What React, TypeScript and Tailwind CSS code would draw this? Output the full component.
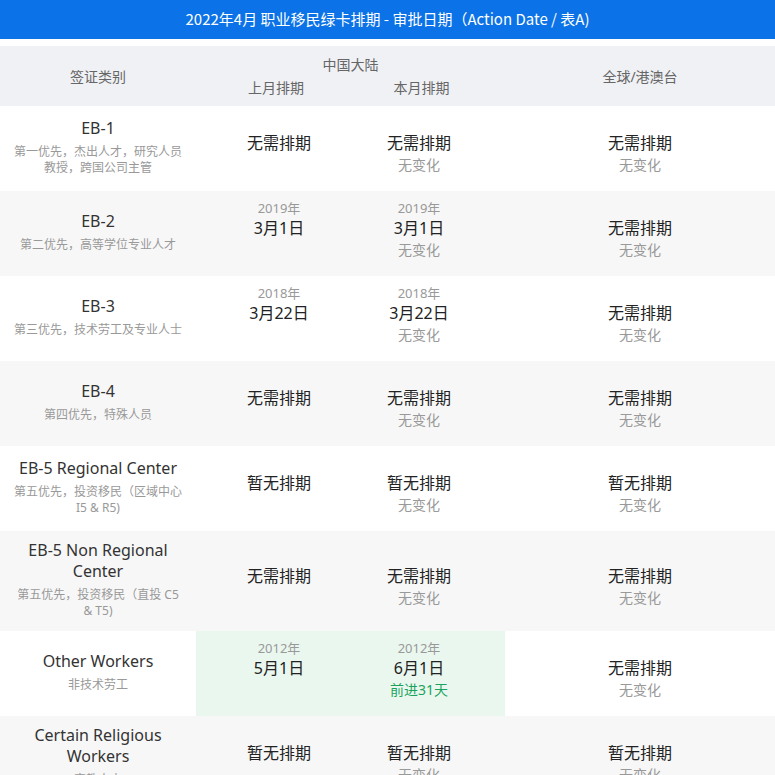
type Val = { year?: string; value: string; change?: string; green?: boolean }

type Row = {
  title: string[]
  sub: string[]
  prev: Val
  cur: Val
  world: Val
  h: string
  hl?: boolean
}

const rows: Row[] = [
  {
    title: ["EB-1"],
    sub: ["第一优先，杰出人才，研究人员", "教授，跨国公司主管"],
    prev: { value: "无需排期" },
    cur: { value: "无需排期", change: "无变化" },
    world: { value: "无需排期", change: "无变化" },
    h: "h-[85px]",
  },
  {
    title: ["EB-2"],
    sub: ["第二优先，高等学位专业人才"],
    prev: { year: "2019年", value: "3月1日" },
    cur: { year: "2019年", value: "3月1日", change: "无变化" },
    world: { value: "无需排期", change: "无变化" },
    h: "h-[85px]",
  },
  {
    title: ["EB-3"],
    sub: ["第三优先，技术劳工及专业人士"],
    prev: { year: "2018年", value: "3月22日" },
    cur: { year: "2018年", value: "3月22日", change: "无变化" },
    world: { value: "无需排期", change: "无变化" },
    h: "h-[85px]",
  },
  {
    title: ["EB-4"],
    sub: ["第四优先，特殊人员"],
    prev: { value: "无需排期" },
    cur: { value: "无需排期", change: "无变化" },
    world: { value: "无需排期", change: "无变化" },
    h: "h-[85px]",
  },
  {
    title: ["EB-5 Regional Center"],
    sub: ["第五优先，投资移民（区域中心", "I5 & R5)"],
    prev: { value: "暂无排期" },
    cur: { value: "暂无排期", change: "无变化" },
    world: { value: "暂无排期", change: "无变化" },
    h: "h-[85px]",
  },
  {
    title: ["EB-5 Non Regional", "Center"],
    sub: ["第五优先，投资移民（直投 C5", "& T5)"],
    prev: { value: "无需排期" },
    cur: { value: "无需排期", change: "无变化" },
    world: { value: "无需排期", change: "无变化" },
    h: "h-[100px]",
  },
  {
    title: ["Other Workers"],
    sub: ["非技术劳工"],
    prev: { year: "2012年", value: "5月1日" },
    cur: { year: "2012年", value: "6月1日", change: "前进31天", green: true },
    world: { value: "无需排期", change: "无变化" },
    h: "h-[85px]",
    hl: true,
  },
  {
    title: ["Certain Religious", "Workers"],
    sub: ["宗教人士"],
    prev: { value: "暂无排期" },
    cur: { value: "暂无排期", change: "无变化" },
    world: { value: "暂无排期", change: "无变化" },
    h: "h-[85px]",
  },
]

function Value({ v }: { v: Val }) {
  return (
    <>
      {v.year && <div className="text-[13px] leading-[17px] -mt-[17px] text-[#999]">{v.year}</div>}
      <div className="text-[16px] leading-[22px] text-[#222]">{v.value}</div>
      <div className={`text-[14px] leading-[21px] ${v.green ? "text-[#1ba35d]" : "text-[#999]"}`}>
        {v.change ?? "\u00a0"}
      </div>
    </>
  )
}

export default function App() {
  return (
    <div className="w-[775px] bg-white" style={{ fontFamily: '"Noto Sans", "Noto Sans CJK SC", sans-serif' }}>
      <div
        className="h-[39px] bg-[#0b72e7] flex items-center justify-center text-white text-[15px]"
        style={{ fontFamily: '"Noto Sans CJK SC", sans-serif' }}
      >
        2022年4月 职业移民绿卡排期 - 审批日期（Action Date / 表A)
      </div>

      <div className="mt-[7px] h-[60px] bg-[#f0f1f5] grid grid-cols-[196px_154px_155px_1fr] text-[14px] text-[#666]">
        <div className="flex items-center justify-center">签证类别</div>
        <div className="col-span-2 flex flex-col items-center justify-center">
          <div className="leading-[20px]">中国大陆</div>
          <div className="mt-[3px] w-full grid grid-cols-[154px_155px] leading-[20px]">
            <div className="text-center pl-[6px]">上月排期</div>
            <div className="text-center pr-[12px]">本月排期</div>
          </div>
        </div>
        <div className="flex items-center justify-center">全球/港澳台</div>
      </div>

      {rows.map((r, i) => (
        <div
          key={r.title.join(" ")}
          className={`grid grid-cols-[196px_154px_155px_1fr] ${r.h} ${i % 2 === 1 ? "bg-[#f7f7f7]" : "bg-white"}`}
        >
          <div className="flex flex-col items-center justify-center px-[12px] pb-[4px] text-center">
            {r.title.map((t) => (
              <div key={t} className="text-[16px] leading-[21px] text-[#333] whitespace-nowrap">
                {t}
              </div>
            ))}
            <div className="mt-[5px]">
              {r.sub.map((s) => (
                <div key={s} className="text-[12px] leading-[16px] text-[#999] whitespace-nowrap">
                  {s}
                </div>
              ))}
            </div>
          </div>
          <div className={`flex flex-col items-center justify-center pt-[10px] pl-[12px] ${r.hl ? "bg-[#eaf7ef]" : ""}`}>
            <Value v={r.prev} />
          </div>
          <div className={`flex flex-col items-center justify-center pt-[10px] pr-[17px] ${r.hl ? "bg-[#eaf7ef]" : ""}`}>
            <Value v={r.cur} />
          </div>
          <div className="flex flex-col items-center justify-center pt-[10px]">
            <Value v={r.world} />
          </div>
        </div>
      ))}
    </div>
  )
}
